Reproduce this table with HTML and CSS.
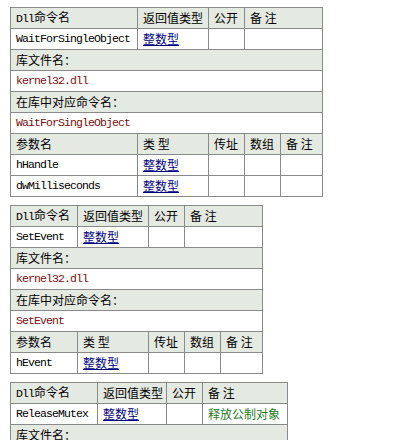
FILE: index.html
```html
<!DOCTYPE html>
<html>
<head>
<meta charset="utf-8">
<link rel="stylesheet" href="styles.css">
</head>
<body>
<div class="page">
  <table class="dll t1">
    <colgroup><col class="c1"><col class="c2"><col class="c3"><col class="c4"><col class="c5"></colgroup>
    <tr class="hd"><td><span class="en">Dll</span>命令名</td><td>返回值类型</td><td>公开</td><td colspan="2">备 注</td></tr>
    <tr><td class="en">WaitForSingleObject</td><td><a class="lnk">整数型</a></td><td></td><td colspan="2"></td></tr>
    <tr class="hd"><td colspan="5">库文件名：</td></tr>
    <tr><td colspan="5" class="en red">kernel32.dll</td></tr>
    <tr class="hd"><td colspan="5">在库中对应命令名：</td></tr>
    <tr><td colspan="5" class="en red">WaitForSingleObject</td></tr>
    <tr class="hd"><td>参数名</td><td>类 型</td><td>传址</td><td>数组</td><td>备 注</td></tr>
    <tr><td class="en">hHandle</td><td><a class="lnk">整数型</a></td><td></td><td></td><td></td></tr>
    <tr><td class="en">dwMilliseconds</td><td><a class="lnk">整数型</a></td><td></td><td></td><td></td></tr>
  </table>

  <table class="dll t2">
    <colgroup><col class="c1"><col class="c2"><col class="c3"><col class="c4"><col class="c5"></colgroup>
    <tr class="hd"><td><span class="en">Dll</span>命令名</td><td>返回值类型</td><td>公开</td><td colspan="2">备 注</td></tr>
    <tr><td class="en">SetEvent</td><td><a class="lnk">整数型</a></td><td></td><td colspan="2"></td></tr>
    <tr class="hd"><td colspan="5">库文件名：</td></tr>
    <tr><td colspan="5" class="en red">kernel32.dll</td></tr>
    <tr class="hd"><td colspan="5">在库中对应命令名：</td></tr>
    <tr><td colspan="5" class="en red">SetEvent</td></tr>
    <tr class="hd"><td>参数名</td><td>类 型</td><td>传址</td><td>数组</td><td>备 注</td></tr>
    <tr><td class="en">hEvent</td><td><a class="lnk">整数型</a></td><td></td><td></td><td></td></tr>
  </table>

  <table class="dll t3">
    <colgroup><col class="c1"><col class="c2"><col class="c3"><col class="c4"><col class="c5"></colgroup>
    <tr class="hd"><td><span class="en">Dll</span>命令名</td><td>返回值类型</td><td>公开</td><td colspan="2">备 注</td></tr>
    <tr><td class="en">ReleaseMutex</td><td><a class="lnk">整数型</a></td><td></td><td colspan="2" class="green">释放公制对象</td></tr>
    <tr class="hd"><td colspan="5">库文件名：</td></tr>
  </table>
</div>
</body>
</html>
```

FILE: styles.css
```css
html, body {
  margin: 0;
  padding: 0;
  background: #ffffff;
}
.page {
  display: flex;
  flex-direction: column;
  align-items: flex-start;
  gap: 8px;
  padding: 7px 10px 0;
}
.dll {
  border-collapse: collapse;
  table-layout: fixed;
  font-family: "Noto Sans CJK SC", "Liberation Sans", sans-serif;
  font-size: 12px;
  color: #000;
}
.dll td {
  border: 1px solid #8a8a8a;
  height: 20px;
  padding: 0 0 0 5px;
  line-height: 16px;
  white-space: nowrap;
  overflow: hidden;
  vertical-align: middle;
}
.dll tr.hd td {
  background: #e4e9e1;
}
.en {
  font-family: "Liberation Mono", monospace;
  font-size: 11.5px;
  letter-spacing: -0.9px;
}
.red {
  color: #7a1010;
}
.green {
  color: #1f7a1f;
}
.lnk {
  color: #000080;
  text-decoration: underline;
}
.t1 { width: 313px; }
.t1 .c1 { width: 127px; }
.t1 .c2 { width: 71px; }
.t1 .c3 { width: 36px; }
.t1 .c4 { width: 36px; }
.t1 .c5 { width: 42px; }
.t2 { width: 253px; }
.t2 .c1 { width: 67px; }
.t2 .c2 { width: 71px; }
.t2 .c3 { width: 36px; }
.t2 .c4 { width: 36px; }
.t2 .c5 { width: 42px; }
.t3 { width: 278px; }
.t3 .c1 { width: 87px; }
.t3 .c2 { width: 69px; }
.t3 .c3 { width: 36px; }
.t3 .c4 { width: 36px; }
.t3 .c5 { width: 49px; }
```
